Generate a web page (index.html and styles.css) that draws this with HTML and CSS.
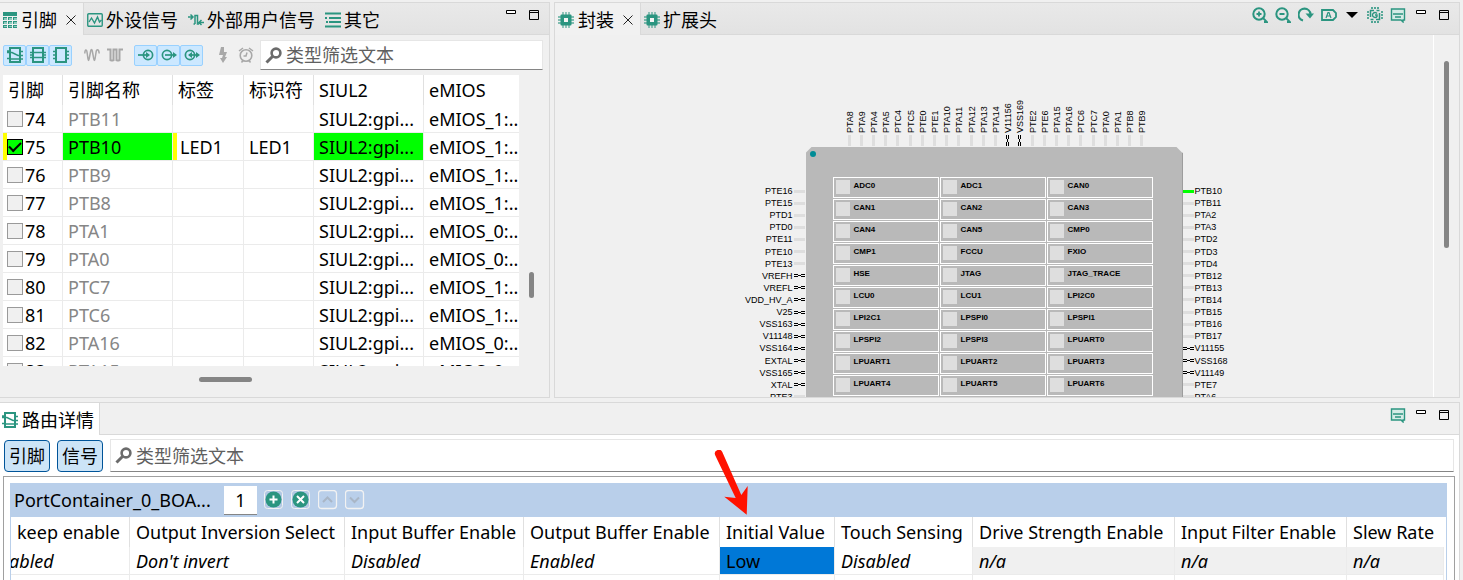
FILE: index.html
```html
<!DOCTYPE html>
<html lang="zh-CN">
<head>
<meta charset="utf-8">
<title>引脚</title>
<meta name="viewport" content="width=device-width, initial-scale=1">
<link rel="stylesheet" href="styles.css">
</head>
<body>
<svg class="defs" width="0" height="0" aria-hidden="true">
  <symbol id="i-table" viewBox="0 0 14 16"><path fill="#2b9580" d="M0 0h14v4H0zM0 5h4v3H0zM5 5h4v3H5zM10 5h4v3h-4zM0 9h4v3H0zM5 9h4v3H5zM10 9h4v3h-4zM0 13h4v3H0zM5 13h4v3H5zM10 13h4v3h-4z"/><path fill="#8ccabd" d="M1 6h3v2H1zM6 6h3v2H6zM11 6h3v2h-3zM1 10h3v2H1zM6 10h3v2H6zM11 10h3v2h-3zM1 14h3v1H1zM6 14h3v1H6zM11 14h3v1h-3z"/></symbol>
  <symbol id="i-signal" viewBox="0 0 16 14"><rect x=".75" y=".75" width="14.5" height="12.5" rx="1" fill="none" stroke="#2b9580" stroke-width="1.4"/><path d="M2 9l2.500-4 3 5 3-6 2 5 2-2" fill="none" stroke="#2b9580" stroke-width="1.4"/></symbol>
  <symbol id="i-user" viewBox="0 0 16 14"><path d="M0 4h5M2.500 1.500L5 4 2.500 6.500M16 9.500h-5M13.500 7L11 9.500l2.500 2.500M7 11V2.500h2.500V11H11M7 11H5.500" fill="none" stroke="#2b9580" stroke-width="1.500"/></symbol>
  <symbol id="i-list" viewBox="0 0 16 16"><path d="M0 1.500h16M4 6h12M4 10h12M0 14.500h16" stroke="#2b9580" stroke-width="2"/><path d="M0 6h2M1 10h2" stroke="#2b9580" stroke-width="2"/></symbol>
  <symbol id="i-chip" viewBox="0 0 16 16"><path d="M5 0v16M8 0v16M11 0v16M0 5h16M0 8h16M0 11h16" stroke="#2b9580" stroke-width="1.300" opacity=".75"/><rect x="2.500" y="2.500" width="11" height="11" rx="1" fill="#2b9580"/><rect x="6" y="6" width="4" height="4" fill="#f4f4f4"/></symbol>
  <symbol id="i-route" viewBox="0 0 16 16"><path d="M3 1h10v14H3z" fill="none" stroke="#2b9580" stroke-width="2"/><path d="M0 4h3M0 5.500h5l6 3h5M0 11.500h3M13 4.500h3M4 12h12" fill="none" stroke="#2b9580" stroke-width="1.400"/></symbol>
  <symbol id="i-route2" viewBox="0 0 16 16"><path d="M3 1h10v14H3z" fill="none" stroke="#2b9580" stroke-width="2"/><path d="M0 5.500h16M0 8h3M0 10.500h16M13 8h3" fill="none" stroke="#2b9580" stroke-width="1.400"/></symbol>
  <symbol id="i-route3" viewBox="0 0 16 16"><path d="M3 1h10v14H3z" fill="none" stroke="#2b9580" stroke-width="2"/><path d="M0 4.500h3M0 8h3M0 11.500h3M13 4.500h3M13 8h3M13 11.500h3" fill="none" stroke="#2b9580" stroke-width="1.400"/></symbol>
  <symbol id="i-sine" viewBox="0 0 16 14"><path d="M.8 5.500C1 1 2.500 1 3 4l1 7c.3 2 .8 2 1.100 0L6.700 3c.4-2 1.200-2 1.600 0l1.500 8c.3 2 .9 2 1.200 0l1.200-7.500C12.700 1 14.800.500 15.200 5.500" fill="none" stroke="#a8a8a8" stroke-width="1.500"/></symbol>
  <symbol id="i-square" viewBox="0 0 16 14"><path d="M0 1.500h3.500V13M6.500 13V1.500h3V13M12.500 13V1.500H16M3.500 12.500h3M9.500 12.500h3" fill="none" stroke="#a8a8a8" stroke-width="2"/></symbol>
  <symbol id="i-in" viewBox="0 0 16 12"><circle cx="10" cy="6" r="4.600" fill="none" stroke="#2b9580" stroke-width="1.700"/><path d="M0 6h9" stroke="#2b9580" stroke-width="1.700"/><path d="M8 3l4 3-4 3z" fill="#2b9580"/></symbol>
  <symbol id="i-out" viewBox="0 0 16 12"><circle cx="6" cy="6" r="4.600" fill="none" stroke="#2b9580" stroke-width="1.700"/><path d="M4 6h10" stroke="#2b9580" stroke-width="1.700"/><path d="M12 3l4 3-4 3z" fill="#2b9580"/></symbol>
  <symbol id="i-inout" viewBox="0 0 16 12"><circle cx="6" cy="6" r="4.600" fill="none" stroke="#2b9580" stroke-width="1.700"/><path d="M5 6h9" stroke="#2b9580" stroke-width="1.700"/><path d="M12 3l4 3-4 3zM8 3L4 6l4 3z" fill="#2b9580"/></symbol>
  <symbol id="i-bolt" viewBox="0 0 10 16"><path d="M3 0h3v5h3L7 10h2l-4 6-3-5h2l1-3H1z" fill="#a8a8a8"/></symbol>
  <symbol id="i-alarm" viewBox="0 0 16 16"><circle cx="8" cy="8.500" r="5.800" fill="none" stroke="#a8a8a8" stroke-width="1.600"/><path d="M1 4l4-3M15 4l-4-3M3.500 15.500l1.500-2M12.500 15.500l-1.500-2M9 5.500l-1 3.500H5.500" fill="none" stroke="#a8a8a8" stroke-width="1.500"/></symbol>
  <symbol id="i-find" viewBox="0 0 17 17"><circle cx="11" cy="6" r="4.400" fill="none" stroke="#6b6b6b" stroke-width="2.600"/><path d="M7.500 9.500L1.500 15.500" stroke="#6b6b6b" stroke-width="3"/></symbol>
  <symbol id="i-zoomin" viewBox="0 0 16 16"><circle cx="7" cy="7" r="5.700" fill="none" stroke="#2b9580" stroke-width="2"/><path d="M11 11l4 4h-3M4.500 7h5M7 4.500v5" fill="none" stroke="#2b9580" stroke-width="1.800"/></symbol>
  <symbol id="i-zoomout" viewBox="0 0 16 16"><circle cx="7" cy="7" r="5.700" fill="none" stroke="#2b9580" stroke-width="2"/><path d="M11 11l4 4h-3M4.500 7h5" fill="none" stroke="#2b9580" stroke-width="1.800"/></symbol>
  <symbol id="i-rotate" viewBox="0 0 16 16"><path d="M5 13.500A6 6 0 1 1 12.500 7" fill="none" stroke="#2b9580" stroke-width="2.200"/><path d="M7.500 6.500H16L12 11.500z" fill="#2b9580"/></symbol>
  <symbol id="i-label" viewBox="0 0 16 12"><path d="M1 1h11l3 3v4l-3 3H1z" fill="none" stroke="#2b9580" stroke-width="1.800"/><path d="M5 9l2-5.500h1L10 9M6 7h3" fill="none" stroke="#2b9580" stroke-width="1.200"/></symbol>
  <symbol id="i-chipturn" viewBox="0 0 16 16"><path d="M5 0v2M8 0v2M11 0v2M5 14v2M8 14v2M11 14v2M0 5h2M0 8h2M0 11h2M14 5h2M14 8h2M14 11h2" stroke="#2b9580" stroke-width="1.600"/><path d="M7 3.500H3.500V10M9 12.500h3.500V6M9.500 3.500h3M3.500 12.500h3" fill="none" stroke="#2b9580" stroke-width="1.500"/><path d="M10 6.500A2.500 2.500 0 1 0 10 9.500V8H8" fill="none" stroke="#2b9580" stroke-width="1.400"/></symbol>
  <symbol id="i-note" viewBox="0 0 16 15"><path d="M1.500 1h13v11H13v2l-2-2H1.500z" fill="#d4ebe6" stroke="#2b9580" stroke-width="1.400"/><path d="M3 6h10M5 9h6" stroke="#2b9580" stroke-width="1.500"/></symbol>
  <symbol id="i-min" viewBox="0 0 10 4"><path d="M.5.500h9v3h-9z" fill="#fff" stroke="#000"/></symbol>
  <symbol id="i-max" viewBox="0 0 10 10"><path d="M.5.500h9v9h-9zM.5 2.500h9" fill="none" stroke="#000"/></symbol>
  <symbol id="i-close" viewBox="0 0 10 10"><path d="M.5.500l9 9M9.500.500l-9 9" stroke="#222" stroke-width="1"/></symbol>
  <symbol id="i-power" viewBox="0 0 11 3"><path d="M0 .5h4M0 2.500h4M7 .5h4M7 2.500h4M4 1.500h3" stroke="#000"/></symbol>
  <symbol id="i-power-v" viewBox="0 0 3 11"><path d="M.5 0v4M2.500 0v4M.5 7v4M2.500 7v4M1.500 4v3" stroke="#000"/></symbol>
  <symbol id="i-add" viewBox="0 0 20 20"><rect x=".5" y=".5" width="18" height="18" rx="3" fill="#b3c9e4" stroke="#f2f2f2"/><circle cx="9.500" cy="9.500" r="8" fill="#2b9580"/><path d="M9.500 5.500v8M5.500 9.500h8" stroke="#fff" stroke-width="2"/></symbol>
  <symbol id="i-del" viewBox="0 0 20 20"><rect x=".5" y=".5" width="18" height="18" rx="3" fill="#b3c9e4" stroke="#f2f2f2"/><circle cx="9.500" cy="9.500" r="8" fill="#2b9580"/><path d="M6 6l7 7M13 6l-7 7" stroke="#fff" stroke-width="2"/></symbol>
  <symbol id="i-up" viewBox="0 0 20 20"><rect x=".5" y=".5" width="18" height="18" rx="3" fill="none" stroke="#f2f2f2" stroke-width="1.300"/><path d="M5 12l4.500-4.500L14 12" fill="none" stroke="#a9b6c6" stroke-width="2"/></symbol>
  <symbol id="i-down" viewBox="0 0 20 20"><rect x=".5" y=".5" width="18" height="18" rx="3" fill="none" stroke="#f2f2f2" stroke-width="1.300"/><path d="M5 7.500L9.500 12 14 7.500" fill="none" stroke="#a9b6c6" stroke-width="2"/></symbol>
</svg>

<main class="workbench">
  <section class="pane pane-pins">
    <header class="tabbar">
      <div class="tab tab-active"><svg width="14" height="16"><use href="#i-table"/></svg><span>引脚</span><button class="icon close" aria-label="关闭"><svg width="10" height="10"><use href="#i-close"/></svg></button></div>
      <div class="tab"><svg width="16" height="14"><use href="#i-signal"/></svg><span>外设信号</span></div>
      <div class="tab"><svg width="16" height="14"><use href="#i-user"/></svg><span>外部用户信号</span></div>
      <div class="tab"><svg width="16" height="16"><use href="#i-list"/></svg><span>其它</span></div>
      <div class="actions">
        <button class="icon" aria-label="最小化"><svg width="10" height="4"><use href="#i-min"/></svg></button>
        <button class="icon" aria-label="最大化"><svg width="10" height="10"><use href="#i-max"/></svg></button>
      </div>
    </header>
    <div class="toolbar">
      <div class="group">
        <button class="tool on" aria-label="已路由"><svg width="16" height="16"><use href="#i-route"/></svg></button>
        <button class="tool on" aria-label="部分路由"><svg width="16" height="16"><use href="#i-route2"/></svg></button>
        <button class="tool on" aria-label="未路由"><svg width="16" height="16"><use href="#i-route3"/></svg></button>
      </div>
      <div class="group">
        <button class="tool" aria-label="模拟"><svg width="16" height="14"><use href="#i-sine"/></svg></button>
        <button class="tool" aria-label="数字"><svg width="16" height="14"><use href="#i-square"/></svg></button>
      </div>
      <div class="group">
        <button class="tool on" aria-label="输入"><svg width="16" height="12"><use href="#i-in"/></svg></button>
        <button class="tool on" aria-label="输出"><svg width="16" height="12"><use href="#i-out"/></svg></button>
        <button class="tool on" aria-label="双向"><svg width="16" height="12"><use href="#i-inout"/></svg></button>
      </div>
      <div class="group">
        <button class="tool" aria-label="电源"><svg width="10" height="16"><use href="#i-bolt"/></svg></button>
        <button class="tool" aria-label="时钟"><svg width="16" height="16"><use href="#i-alarm"/></svg></button>
      </div>
      <label class="search"><svg width="17" height="17"><use href="#i-find"/></svg><input type="text" placeholder="类型筛选文本" aria-label="类型筛选文本"></label>
    </div>
    <div class="pin-area">
      <div class="pin-clip">
        <table class="pins">
          <colgroup><col class="w60"><col class="w110"><col class="w71"><col class="w70"><col class="w110"><col></colgroup>
          <thead><tr><th>引脚</th><th>引脚名称</th><th>标签</th><th>标识符</th><th>SIUL2</th><th>eMIOS</th></tr></thead>
          <tbody>
            <tr><td><label class="pin-no"><input type="checkbox">74</label></td><td>PTB11</td><td></td><td></td><td>SIUL2:gpi...</td><td>eMIOS_1:..</td></tr>
            <tr class="routed"><td><label class="pin-no"><input type="checkbox" checked>75</label></td><td>PTB10</td><td>LED1</td><td>LED1</td><td>SIUL2:gpi...</td><td>eMIOS_1:..</td></tr>
            <tr><td><label class="pin-no"><input type="checkbox">76</label></td><td>PTB9</td><td></td><td></td><td>SIUL2:gpi...</td><td>eMIOS_1:..</td></tr>
            <tr><td><label class="pin-no"><input type="checkbox">77</label></td><td>PTB8</td><td></td><td></td><td>SIUL2:gpi...</td><td>eMIOS_1:..</td></tr>
            <tr><td><label class="pin-no"><input type="checkbox">78</label></td><td>PTA1</td><td></td><td></td><td>SIUL2:gpi...</td><td>eMIOS_0:..</td></tr>
            <tr><td><label class="pin-no"><input type="checkbox">79</label></td><td>PTA0</td><td></td><td></td><td>SIUL2:gpi...</td><td>eMIOS_0:..</td></tr>
            <tr><td><label class="pin-no"><input type="checkbox">80</label></td><td>PTC7</td><td></td><td></td><td>SIUL2:gpi...</td><td>eMIOS_1:..</td></tr>
            <tr><td><label class="pin-no"><input type="checkbox">81</label></td><td>PTC6</td><td></td><td></td><td>SIUL2:gpi...</td><td>eMIOS_1:..</td></tr>
            <tr><td><label class="pin-no"><input type="checkbox">82</label></td><td>PTA16</td><td></td><td></td><td>SIUL2:gpi...</td><td>eMIOS_0:..</td></tr>
            <tr><td><label class="pin-no"><input type="checkbox">83</label></td><td>PTA15</td><td></td><td></td><td>SIUL2:gpi...</td><td>eMIOS_0:..</td></tr>
          </tbody>
        </table>
      </div>
      <div class="vtrack"><div class="vthumb"></div></div>
    </div>
    <div class="htrack"><div class="hthumb"></div></div>
  </section>

  <section class="pane pane-package">
    <header class="tabbar">
      <div class="tab tab-active"><svg width="16" height="16"><use href="#i-chip"/></svg><span>封装</span><button class="icon close" aria-label="关闭"><svg width="10" height="10"><use href="#i-close"/></svg></button></div>
      <div class="tab"><svg width="16" height="16"><use href="#i-chip"/></svg><span>扩展头</span></div>
      <div class="actions tools">
        <button class="icon" aria-label="放大"><svg width="16" height="16"><use href="#i-zoomin"/></svg></button>
        <button class="icon" aria-label="缩小"><svg width="16" height="16"><use href="#i-zoomout"/></svg></button>
        <button class="icon" aria-label="旋转"><svg width="16" height="16"><use href="#i-rotate"/></svg></button>
        <button class="icon" aria-label="标签"><svg width="16" height="12"><use href="#i-label"/></svg></button>
        <button class="icon more" aria-label="更多"><svg width="12" height="6" viewBox="0 0 12 6"><path d="M0 0h12L6 6z"/></svg></button>
        <button class="icon" aria-label="切换封装"><svg width="16" height="16"><use href="#i-chipturn"/></svg></button>
        <button class="icon" aria-label="备注"><svg width="16" height="15"><use href="#i-note"/></svg></button>
        <button class="icon wide" aria-label="最小化"><svg width="10" height="4"><use href="#i-min"/></svg></button>
        <button class="icon wide" aria-label="最大化"><svg width="10" height="10"><use href="#i-max"/></svg></button>
      </div>
    </header>
    <div class="canvas-row">
      <div class="canvas">
        <ul class="side top">
          <li>PTA8</li><li>PTA9</li><li>PTA4</li><li>PTA5</li><li>PTC4</li><li>PTC5</li><li>PTE0</li><li>PTE1</li><li>PTA10</li><li>PTA11</li><li>PTA12</li><li>PTA13</li><li>PTA14</li>
          <li class="power">V11156<svg width="3" height="11"><use href="#i-power-v"/></svg></li>
          <li class="power">VSS169<svg width="3" height="11"><use href="#i-power-v"/></svg></li>
          <li>PTE2</li><li>PTE6</li><li>PTA15</li><li>PTA16</li><li>PTC6</li><li>PTC7</li><li>PTA0</li><li>PTA1</li><li>PTB8</li><li>PTB9</li>
        </ul>
        <ul class="side left">
          <li>PTE16</li><li>PTE15</li><li>PTD1</li><li>PTD0</li><li>PTE11</li><li>PTE10</li><li>PTE13</li>
          <li class="power">VREFH<svg width="11" height="3"><use href="#i-power"/></svg></li>
          <li class="power">VREFL<svg width="11" height="3"><use href="#i-power"/></svg></li>
          <li class="power">VDD_HV_A<svg width="11" height="3"><use href="#i-power"/></svg></li>
          <li class="power">V25<svg width="11" height="3"><use href="#i-power"/></svg></li>
          <li class="power">VSS163<svg width="11" height="3"><use href="#i-power"/></svg></li>
          <li class="power">V11148<svg width="11" height="3"><use href="#i-power"/></svg></li>
          <li class="power">VSS164<svg width="11" height="3"><use href="#i-power"/></svg></li>
          <li class="power">EXTAL<svg width="11" height="3"><use href="#i-power"/></svg></li>
          <li class="power">VSS165<svg width="11" height="3"><use href="#i-power"/></svg></li>
          <li class="power">XTAL<svg width="11" height="3"><use href="#i-power"/></svg></li>
          <li>PTE3</li>
        </ul>
        <div class="chip">
          <span class="dot"></span>
          <ul class="modules">
            <li>ADC0</li><li>ADC1</li><li>CAN0</li>
            <li>CAN1</li><li>CAN2</li><li>CAN3</li>
            <li>CAN4</li><li>CAN5</li><li>CMP0</li>
            <li>CMP1</li><li>FCCU</li><li>FXIO</li>
            <li>HSE</li><li>JTAG</li><li>JTAG_TRACE</li>
            <li>LCU0</li><li>LCU1</li><li>LPI2C0</li>
            <li>LPI2C1</li><li>LPSPI0</li><li>LPSPI1</li>
            <li>LPSPI2</li><li>LPSPI3</li><li>LPUART0</li>
            <li>LPUART1</li><li>LPUART2</li><li>LPUART3</li>
            <li>LPUART4</li><li>LPUART5</li><li>LPUART6</li>
          </ul>
        </div>
        <ul class="side right">
          <li class="active">PTB10</li><li>PTB11</li><li>PTA2</li><li>PTA3</li><li>PTD2</li><li>PTD3</li><li>PTD4</li><li>PTB12</li><li>PTB13</li><li>PTB14</li><li>PTB15</li><li>PTB16</li><li>PTB17</li>
          <li class="power"><svg width="11" height="3"><use href="#i-power"/></svg>V11155</li>
          <li class="power"><svg width="11" height="3"><use href="#i-power"/></svg>VSS168</li>
          <li class="power"><svg width="11" height="3"><use href="#i-power"/></svg>V11149</li>
          <li>PTE7</li><li>PTA6</li>
        </ul>
      </div>
      <div class="vtrack package-track"><div class="vthumb"></div></div>
    </div>
  </section>

  <section class="pane pane-routing">
    <header class="tabbar">
      <div class="tab tab-active"><svg width="16" height="16"><use href="#i-route"/></svg><span>路由详情</span></div>
      <div class="actions tools">
        <button class="icon" aria-label="备注"><svg width="16" height="15"><use href="#i-note"/></svg></button>
        <button class="icon wide" aria-label="最小化"><svg width="10" height="4"><use href="#i-min"/></svg></button>
        <button class="icon wide" aria-label="最大化"><svg width="10" height="10"><use href="#i-max"/></svg></button>
      </div>
    </header>
    <div class="filterbar">
      <button class="toggle" aria-pressed="true">引脚</button>
      <button class="toggle" aria-pressed="true">信号</button>
      <label class="search"><svg width="17" height="17"><use href="#i-find"/></svg><input type="text" placeholder="类型筛选文本" aria-label="类型筛选文本"></label>
    </div>
    <div class="frame">
      <div class="container-bar">
        <label for="count">PortContainer_0_BOA...</label>
        <input id="count" type="text" value="1">
        <div class="container-actions">
          <button class="icon" aria-label="添加"><svg width="20" height="20"><use href="#i-add"/></svg></button>
          <button class="icon" aria-label="删除"><svg width="20" height="20"><use href="#i-del"/></svg></button>
          <button class="icon" aria-label="上移" disabled><svg width="20" height="20"><use href="#i-up"/></svg></button>
          <button class="icon" aria-label="下移" disabled><svg width="20" height="20"><use href="#i-down"/></svg></button>
        </div>
      </div>
      <div class="route-wrap">
        <table class="routes">
          <colgroup><col class="w119"><col class="w215"><col class="w179"><col class="w196"><col class="w115"><col class="w138"><col class="w202"><col class="w172"><col></colgroup>
          <thead><tr><th>keep enable</th><th>Output Inversion Select</th><th>Input Buffer Enable</th><th>Output Buffer Enable</th><th class="pointed">Initial Value<svg class="arrow" width="36" height="66" viewBox="0 0 36 66"><path d="M1.300 5.500A3.900 3.900 0 0 1 8.300 2L27.300 45 33.700 36 32.700 64.700 10.300 46.700 21.700 48z" fill="#ff1200"/></svg></th><th>Touch Sensing</th><th>Drive Strength Enable</th><th>Input Filter Enable</th><th>Slew Rate</th></tr></thead>
          <tbody>
            <tr><td class="cut"><span>abled</span></td><td>Don't invert</td><td>Disabled</td><td>Enabled</td><td class="selected">Low</td><td>Disabled</td><td class="na">n/a</td><td class="na">n/a</td><td class="na">n/a</td></tr>
            <tr><td></td><td></td><td></td><td></td><td></td><td></td><td></td><td></td><td></td></tr>
          </tbody>
        </table>
      </div>
    </div>
  </section>
</main>
</body>
</html>
```

FILE: styles.css
```css
* { box-sizing: border-box; }

body {
  margin: 0;
  background: #f0f0f0;
  color: #000;
  font: 18px/24px "Noto Sans", "Noto Sans CJK SC", sans-serif;
}

ul { list-style: none; margin: 0; padding: 0; }
svg { display: block; flex: none; }
button, input { font: inherit; color: inherit; }
.defs { position: absolute; }

.workbench {
  display: grid;
  grid-template-columns: 550fr 906fr;
  grid-template-rows: 396fr 178fr;
  gap: 4px;
  height: 100vh;
  padding: 2px 3px 0 0;
  overflow: hidden;
}

.pane {
  display: flex;
  flex-direction: column;
  min-width: 0;
  min-height: 0;
  border: 1px solid #d9d9d9;
  background: #f0f0f0;
}
.pane-pins { border-left: 0; overflow: hidden; }
.pane-package { overflow: hidden; }
.pane-routing { grid-column: 1 / -1; border-left: 0; border-bottom: 0; background: #fff; }

/* Tabs */
.tabbar {
  display: flex;
  flex: none;
  height: 32px;
  background: linear-gradient(#e9e9e9, #e2e2e2);
  box-shadow: inset 0 -1px #d9d9d9;
}
.tab {
  display: flex;
  align-items: center;
  gap: 3px;
  padding: 2px 7px 0 3px;
  white-space: nowrap;
}
.tab-active {
  gap: 4px;
  border-right: 1px solid #d9d9d9;
  background: #f1f1f1;
}
.pane-routing .tabbar { background: #f0f0f0; }
.pane-routing .tab-active { padding: 2px 5px 0 2px; background: #fff; }
.actions {
  display: flex;
  align-items: flex-start;
  gap: 13px;
  margin-left: auto;
  padding: 7px 10px 0 0;
}
.tools { gap: 7px; height: 24px; padding-top: 4px; }
.tools .icon { min-height: 16px; align-items: center; }
.tools .more { margin: 0 2px; }
.tools .wide { align-items: flex-start; margin: 3px 0 0 3px; }
.tools .wide + .wide { margin-left: 6px; }
.icon {
  display: flex;
  padding: 0;
  border: 0;
  background: none;
}
.close { margin-left: 5px; }

/* Toolbar */
.toolbar {
  display: flex;
  flex: none;
  align-items: center;
  padding: 5px 6px 5px 3px;
}
.group { display: flex; margin-right: 8px; }
.group:nth-child(4) { margin-right: 3px; }
.tool {
  display: flex;
  align-items: center;
  justify-content: center;
  width: 23px;
  height: 21px;
  padding: 0;
  border: 1px solid transparent;
  background: none;
}
.tool.on { border-color: #99d1ff; border-radius: 2px; background: #cce8ff; }
.search {
  display: flex;
  flex: 1;
  align-items: center;
  gap: 4px;
  min-width: 0;
  height: 30px;
  padding: 0 4px;
  border: 1px solid #e6e6e6;
  border-bottom-color: #858585;
  background: #fff;
}
.search input {
  flex: 1;
  min-width: 0;
  padding: 0;
  border: 0;
  outline: 0;
  background: none;
}
.search input::placeholder { color: #606060; opacity: 1; }

/* Pin table */
.pin-area { display: flex; flex: 1; min-height: 0; padding-left: 3px; }
.pin-clip { flex: 1; min-width: 0; overflow: hidden; background: #fff; }
.vtrack { display: flex; flex: none; width: 30px; padding-left: 10px; }
.vthumb { width: 5px; height: 26px; border-radius: 3px; background: #858585; }
.pin-area .vthumb { margin-top: 197px; }
.htrack { flex: none; height: 31px; padding: 11px 0 0 199px; }
.hthumb { width: 53px; height: 5px; border-radius: 3px; background: #858585; }

table { width: 100%; border-spacing: 0; table-layout: fixed; }
th, td {
  height: 28px;
  padding: 0 0 0 5px;
  border-right: 1px solid #ebebeb;
  border-bottom: 1px solid #ebebeb;
  font-weight: 400;
  text-align: left;
  white-space: nowrap;
}
th { height: 30px; border-right-color: #e0e0e0; border-bottom: 0; }
th:last-child, .pins td:last-child { border-right: 0; }
.pins td:nth-child(2) { color: #868686; }
.pins td:first-child { padding-left: 4px; }
.pins td:nth-child(n+3) { overflow: hidden; }
.pin-no { display: flex; align-items: center; gap: 2px; }
.pin-no input {
  appearance: none;
  display: grid;
  place-items: center;
  width: 16px;
  height: 16px;
  margin: 0;
  border: 1px solid #9a9a9a;
  background: #f0f0f0;
}
.pin-no input:checked { border-color: #000; background: #0f0; }
.pin-no input:checked::after {
  content: "";
  width: 10px;
  height: 5px;
  margin-bottom: 3px;
  border: solid #000;
  border-width: 0 0 2px 2px;
  transform: rotate(-45deg);
}
.routed td:first-child { box-shadow: inset 4px 0 #ff0; }
.routed td:nth-child(3) { padding-left: 7px; box-shadow: inset 4px 0 #ff0; }
.pins .routed td:nth-child(2), .routed td:nth-child(5) { background: #0f0; color: #000; }

.w60 { width: 60px; }
.w70 { width: 70px; }
.w71 { width: 71px; }
.w110 { width: 110px; }
.w115 { width: 115px; }
.w119 { width: 119px; }
.w138 { width: 138px; }
.w172 { width: 172px; }
.w179 { width: 179px; }
.w196 { width: 196px; }
.w202 { width: 202px; }
.w215 { width: 215px; }

/* Package view */
.canvas-row { display: flex; flex: 1; min-height: 0; }
.canvas {
  display: grid;
  flex: 1;
  grid-template-columns: 1fr 377px 1fr;
  grid-template-rows: 112px 1fr;
  min-width: 0;
  overflow: hidden;
  border-right: 1px solid #fff;
  font: 9px/12px "Liberation Sans", Arial, sans-serif;
}
.package-track { width: 25px; padding: 26px 0 0 10px; }
.package-track .vthumb { height: 187px; }

.side { display: flex; justify-content: space-between; white-space: nowrap; }
.side li { display: flex; align-items: center; gap: 1px; }
.side li:not(.power)::after { content: ""; width: 11px; height: 3px; background: #dedede; }
.left, .right { flex-direction: column; height: 256px; padding-top: 38px; }
.left li { height: 12px; justify-content: flex-end; padding-right: 1px; }
.right li { height: 12px; }
.right li:not(.power)::after { order: -1; }
.right .active::after { background: #0f0 !important; }
.top { grid-column: 2; padding: 0 34px 1px 38px; }
.top li {
  gap: 2px;
  width: 12px;
  writing-mode: vertical-rl;
  transform: rotate(180deg);
}
.top li:not(.power)::after { order: -1; width: 3px; height: 11px; }
.top .power svg { order: -1; }
.left { grid-column: 1; }

.chip {
  position: relative;
  padding: 30px 30px 0 27px;
  border-right: 1px solid #666;
  background: #b9b9b9;
  clip-path: polygon(6px 0, calc(100% - 6px) 0, 100% 6px, 100% 100%, 0 100%, 0 6px);
}
.dot {
  position: absolute;
  left: 4px;
  top: 4px;
  width: 6px;
  height: 6px;
  border-radius: 50%;
  background: #008c96;
}
.modules { display: grid; grid-template-columns: repeat(3, 1fr); gap: 1px; margin-right: -1px; }
.modules li {
  display: flex;
  align-items: flex-start;
  gap: 4px;
  height: 21px;
  padding: 2px;
  border: 1px solid #fff;
  font-size: 8px;
  font-weight: 700;
}
.modules li::before { content: ""; width: 14px; height: 14px; background: #dedede; }

/* Routing details */
.filterbar {
  display: flex;
  flex: none;
  align-items: flex-end;
  gap: 7px;
  padding: 4px 5px 4px 4px;
}
.toggle {
  width: 46px;
  height: 32px;
  padding: 0;
  border: 1px solid #005499;
  border-radius: 4px;
  background: #cce4f7;
}
.filterbar .search { height: 33px; }
.frame {
  flex: 1;
  margin: 0 4px 0 3px;
  padding: 6px 7px 0 6px;
  border: 1px solid #a0a0a0;
  border-bottom: 0;
}
.container-bar {
  display: flex;
  align-items: center;
  height: 34px;
  padding-left: 4px;
  background: #b9cfea;
}
.container-bar label { width: 210px; white-space: nowrap; }
.container-bar input {
  width: 33px;
  height: 29px;
  padding: 0;
  border: 0;
  border-bottom: 1px solid #858585;
  background: #fff;
  text-align: center;
}
.container-actions { display: flex; gap: 7px; margin-left: 7px; }
.route-wrap { padding-right: 2px; border: solid #b9cfea; border-width: 0 1px; }
.routes td, .routes th { padding-left: 6px; }
.routes td { font-style: italic; }
.routes .cut { padding-left: 0; overflow: hidden; }
.cut span { margin-left: -2px; }
.routes .selected { background: #0078d7; font-style: normal; }
.routes .na { background: #f0f0f0; }
.pointed { position: relative; }
.arrow { position: absolute; left: -6px; top: -67px; }
```
